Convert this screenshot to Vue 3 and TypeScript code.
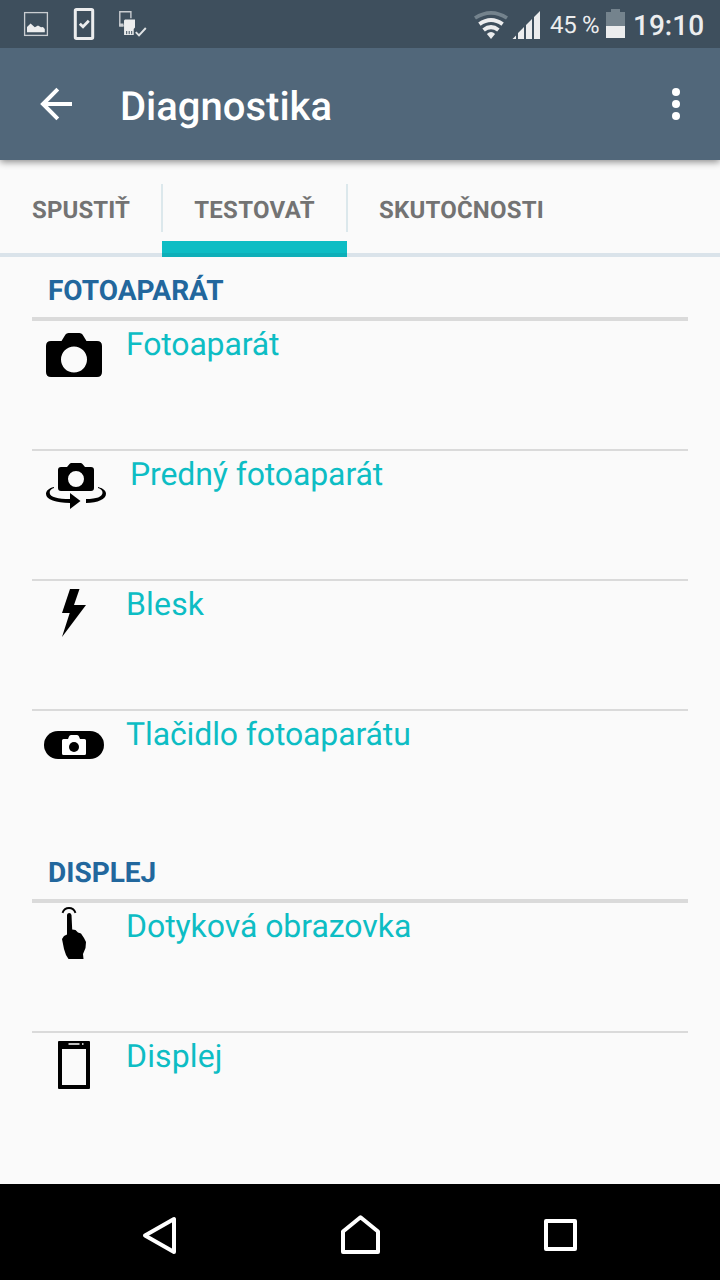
<script setup lang="ts">
import { ref } from 'vue'

type IconName = 'camera' | 'front' | 'flash' | 'button' | 'touch' | 'display'
interface TestItem {
  icon: IconName
  label: string
  tracking: number
}
interface Section {
  title: string
  items: TestItem[]
}

const tabs = ['SPUSTIŤ', 'TESTOVAŤ', 'SKUTOČNOSTI']
const active = ref(1)
const sections: Section[] = [
  {
    title: 'FOTOAPARÁT',
    items: [
      { icon: 'camera', label: 'Fotoaparát', tracking: -0.16 },
      { icon: 'front', label: 'Predný fotoaparát', tracking: -0.12 },
      { icon: 'flash', label: 'Blesk', tracking: 0.15 },
      { icon: 'button', label: 'Tlačidlo fotoaparátu', tracking: -0.12 },
    ],
  },
  {
    title: 'DISPLEJ',
    items: [
      { icon: 'touch', label: 'Dotyková obrazovka', tracking: -0.06 },
      { icon: 'display', label: 'Displej', tracking: 0.14 },
    ],
  },
]
</script>

<template>
  <div class="screen">
    <header class="status">
      <svg class="notifications" viewBox="0 0 160 48">
        <rect x="24.6" y="12.6" width="22.8" height="22.8" fill="none" stroke="#c9cdd1" stroke-width="1.3" />
        <path d="M27 32.3V27l3.6-3.4 4.2 3.6 3.2-1.6 3 1.6 2-.3 1.8 2v3.4z" fill="#ecedee" />
        <rect x="75.3" y="9.500" width="17.4" height="29" rx="1.2" fill="none" stroke="#ecedee" stroke-width="3" />
        <path d="M79.800 23.800l3.200 3 5.800-6" fill="none" stroke="#ecedee" stroke-width="2.8" />
        <path d="M123.500 25.800h-3.700V11.700h11.100v6.500" fill="none" stroke="#c9cdd1" stroke-width="1.4" />
        <path d="M119.200 23.500h4.300v3h-4.300z" fill="#c9cdd1" />
        <path d="M124 20.500l1-1h10v8l-1.300 1.500V35h-9.600z" fill="#ecedee" />
        <path d="M126.700 31v3.200M129.200 31v3.200M131.700 31v3.200" stroke="#3e4f5d" stroke-width="1" />
        <path d="M135.800 32.200l3.200 3.200 6.800-7.400" fill="none" stroke="#dfe2e4" stroke-width="1.9" />
      </svg>
      <div class="indicators">
        <svg class="wifi" viewBox="474 8 34 32">
          <path d="M475 18Q491 7.600 507 18" fill="none" stroke="#74838d" stroke-width="3.600" />
          <path d="M479.400 24.200Q491 15.800 502.600 24.200" fill="none" stroke="#ecedee" stroke-width="4" />
          <path d="M483.600 30Q491 24.200 498.400 30" fill="none" stroke="#ecedee" stroke-width="4" />
          <path d="M486.900 34Q491 29.800 495.100 34L491 39z" fill="#ecedee" />
        </svg>
        <svg class="signal" viewBox="512 8 30 32">
          <path d="M512.500 39l3.500-3.500V39zM518 33l6-6v12h-6zM526 25l6-6v20h-6zM534 17l6-6v28h-6z" fill="#ecedee" />
        </svg>
        <span class="percent">45 %</span>
        <svg class="battery" viewBox="606 8 20 32">
          <path d="M611 9h9v3h5v14h-19V12h5z" fill="#74838d" />
          <path d="M606 26h19v12h-19z" fill="#ecedee" />
        </svg>
        <span class="clock">19:10</span>
      </div>
    </header>

    <div class="appbar">
      <svg class="back" viewBox="40 86 34 36">
        <path d="M72 104H43M57.800 89.200L43 104l14.800 14.800" fill="none" stroke="#fff" stroke-width="4" />
      </svg>
      <h1>Diagnostika</h1>
      <svg class="more" viewBox="668 86 16 36">
        <circle cx="676" cy="92" r="4" fill="#fff" />
        <circle cx="676" cy="104" r="4" fill="#fff" />
        <circle cx="676" cy="116" r="4" fill="#fff" />
      </svg>
    </div>

    <nav class="tabs">
      <button
        v-for="(tab, i) in tabs"
        :key="tab"
        class="tab"
        :class="{ active: active === i }"
        @click="active = i"
      >
        {{ tab }}
      </button>
    </nav>

    <main>
      <section v-for="section in sections" :key="section.title">
        <h2>{{ section.title }}</h2>
        <ul>
          <li v-for="item in section.items" :key="item.label">
            <svg v-if="item.icon === 'camera'" class="icon" viewBox="32 321 90 64">
              <path fill-rule="evenodd" d="M51 341H61.500L65.500 334.500Q66.500 333 68.500 333H79.500Q81.500 333 82.500 334.500L86.500 341H97Q102 341 102 346V372Q102 377 97 377H51Q46 377 46 372V346Q46 341 51 341ZM74 346.500a13 13 0 1 0 0 26a13 13 0 1 0 0-26Z" />
            </svg>
            <svg v-else-if="item.icon === 'front'" class="icon wide" viewBox="32 451 94 64">
              <path fill-rule="evenodd" d="M61 467h6l2.500-3Q70.300 463 71.500 463h9q1.200 0 2 1l2.500 3h6q3 0 3 3v18q0 3-3 3H61q-3 0-3-3v-18q0-3 3-3zM76 471a8 8 0 1 0 0 16a8 8 0 1 0 0-16z" />
              <path d="M54 487C48 488.500 46 491.300 46 494C46 499.500 56 503 70 503V509L80.500 501L70 493V499C58 499 50 497 49.700 493C49.500 490.500 51 489 54 488zM98 487c6 1.600 8 4.100 8 6.800c0 5.200-8 9.200-20 9.200v-4c11 0 16-2.200 16.500-6c.2-2.500-1.500-4-4.500-5z" />
            </svg>
            <svg v-else-if="item.icon === 'flash'" class="icon" viewBox="32 581 90 64">
              <path d="M70 589H79.500L74 605H86L62 637L69.700 613H62Z" />
            </svg>
            <svg v-else-if="item.icon === 'button'" class="icon" viewBox="32 711 90 64">
              <rect x="44" y="731" width="60" height="28" rx="14" />
              <path d="M63.500 739H68l1-2.500q.5-1.500 2-1.500h6q1.500 0 2 1.500l1 2.500h4.500q1.500 0 1.500 1.500v13q0 1.500-1.500 1.500h-21q-1.500 0-1.500-1.500v-13q0-1.500 1.500-1.500z" fill="#fff" />
              <circle cx="74" cy="747" r="5" />
            </svg>
            <svg v-else-if="item.icon === 'touch'" class="icon" viewBox="32 903 90 64">
              <path d="M62.500 912.800Q64.400 908 69 908T75.500 912.800" fill="none" stroke="#000" stroke-width="1.900" />
              <path d="M67 915Q67.300 913 69.200 913T71.500 915L72.200 929.500L75.500 930L78 932.500L81 933.500L84 938L86 942L85.500 948L83 954L83.500 959H68.500L66 955L64 949L62 939L64 936L67 934.500Z" />
            </svg>
            <svg v-else class="icon" viewBox="32 1033 90 64">
              <path fill-rule="evenodd" d="M59 1041h30q1 0 1 1v46q0 1-1 1H59q-1 0-1-1v-46q0-1 1-1zM62 1049v36h24v-36z" />
              <path d="M68.500 1044h11M82 1044h1.500" stroke="#fff" stroke-width="1.500" />
            </svg>
            <span class="label" :style="{ letterSpacing: `${item.tracking}px` }">{{ item.label }}</span>
          </li>
        </ul>
      </section>
    </main>

    <footer class="navbar">
      <svg viewBox="0 1184 720 96">
        <g fill="none" stroke="#fff" stroke-width="4" stroke-linejoin="round">
          <path d="M145 1235.500L174 1219V1252Z" />
          <path d="M343 1252V1231.500L360.500 1217.200L378 1231.500V1252Z" />
          <path d="M546 1221H575V1249H546Z" />
        </g>
      </svg>
    </footer>
  </div>
</template>

<style>
body {
  margin: 0;
}
</style>

<style scoped>
.screen {
  display: flex;
  flex-direction: column;
  width: 720px;
  height: 1280px;
  overflow: hidden;
  background: #fafafa;
  font-family: Roboto, sans-serif;
  text-rendering: geometricPrecision;
}
svg {
  display: block;
  flex: none;
}
.status {
  position: relative;
  z-index: 1;
  display: flex;
  justify-content: space-between;
  height: 48px;
  background: #3e4f5d;
  color: #ecedee;
}
.notifications {
  width: 160px;
  height: 48px;
}
.indicators {
  display: flex;
  align-items: center;
  padding-right: 16px;
}
.wifi {
  width: 34px;
  height: 32px;
  margin-right: 4px;
}
.signal {
  width: 30px;
  height: 32px;
}
.percent {
  width: 56px;
  margin-left: 8px;
  font-size: 24px;
  line-height: 28px;
  white-space: nowrap;
  padding-top: 2px;
  letter-spacing: -0.3px;
}
.battery {
  width: 20px;
  height: 32px;
}
.clock {
  width: 71px;
  margin-left: 7px;
  font-size: 28px;
  font-weight: 500;
  line-height: 34px;
  white-space: nowrap;
  padding-top: 4px;
}
.appbar {
  position: relative;
  display: flex;
  align-items: center;
  height: 112px;
  padding: 0 36px 0 40px;
  background: #51677a;
  color: #fff;
  box-shadow: 0 2px 7px rgba(0, 0, 0, 0.45);
}
.back {
  width: 34px;
  height: 36px;
}
h1 {
  flex: 1;
  margin: 0 0 0 46px;
  padding-top: 6px;
  font-size: 40px;
  line-height: 48px;
  font-weight: 500;
}
.more {
  width: 16px;
  height: 36px;
}
.tabs {
  display: flex;
  height: 97px;
  background: linear-gradient(#dae3ea, #dae3ea) 0 100% / 100% 4px no-repeat;
}
.tab {
  padding: 2px 32px 0;
  border: 0;
  background: none;
  color: #737373;
  font: bold 24px/28px Roboto, sans-serif;
  letter-spacing: 0.2px;
  text-rendering: inherit;
  white-space: nowrap;
}
.tab:first-child {
  width: 162px;
  letter-spacing: 0.1px;
}
.tab:nth-child(2) {
  width: 185px;
  padding: 2px 31px 0;
  letter-spacing: 0.3px;
}
.tab:not(:first-child) {
  background: linear-gradient(#dce8ec, #dce8ec) 0 24px / 1px 48px no-repeat;
}
.tab:not(:last-child) {
  background: linear-gradient(#dce8ec, #dce8ec) 100% 24px / 1px 48px no-repeat;
}
.tab.active {
  background:
    linear-gradient(#0dafb8, #0dafb8) 0 100% / 100% 4px no-repeat,
    linear-gradient(#0dbdc4, #0dbdc4) 0 100% / 100% 16px no-repeat,
    linear-gradient(#dce8ec, #dce8ec) 0 24px / 1px 48px no-repeat,
    linear-gradient(#dce8ec, #dce8ec) 100% 24px / 1px 48px no-repeat;
}
main {
  flex: 1;
  padding: 0 32px;
}
h2 {
  box-sizing: border-box;
  height: 64px;
  margin: 0;
  padding: 17px 16px 0;
  border-bottom: 4px solid #dadada;
  color: #22679d;
  font-size: 28px;
  line-height: 33px;
  font-weight: 700;
}
ul {
  margin: 0;
  padding: 0;
  list-style: none;
}
li {
  display: flex;
  height: 128px;
}
li + li {
  border-top: 2px solid #dadada;
}
.icon {
  width: 90px;
  height: 64px;
  margin-right: 4px;
}
.icon.wide {
  width: 94px;
}
.label {
  padding-top: 4px;
  color: #0dbdc4;
  font-size: 32px;
  line-height: 38px;
}
.navbar {
  height: 96px;
  background: #000;
}
</style>
